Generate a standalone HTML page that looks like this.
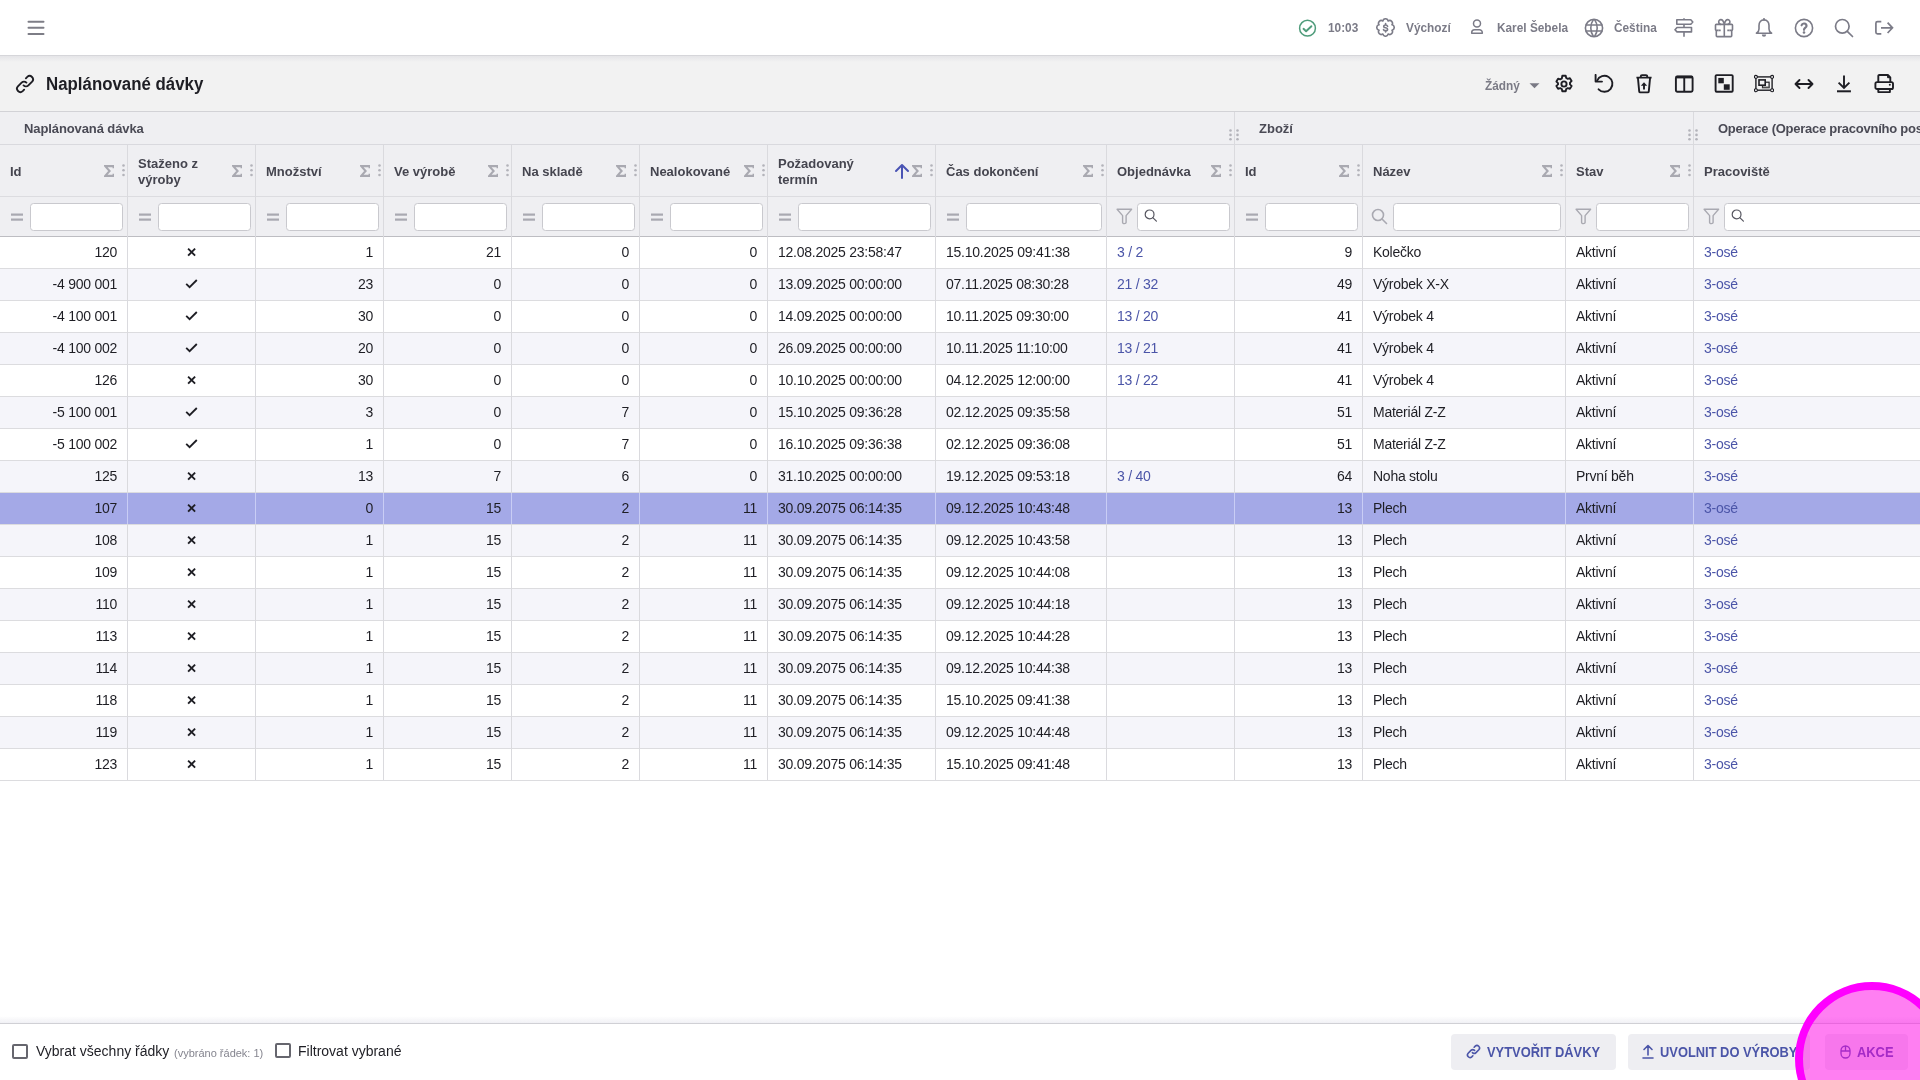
<!DOCTYPE html>
<html><head><meta charset="utf-8"><title>Naplánované dávky</title>
<style>
*{box-sizing:border-box;margin:0;padding:0}
html,body{width:1920px;height:1080px;overflow:hidden;background:#fff;font-family:"Liberation Sans",sans-serif;color:#1e1e24}
.abs{position:absolute}
.topbar{position:absolute;left:0;top:0;width:1920px;height:56px;background:#fff;border-bottom:1px solid #d6d6da}
.shadow{position:absolute;left:0;top:56px;width:1920px;height:6px;background:linear-gradient(#e5e5e8,#f2f2f2)}
.titlebar{position:absolute;left:0;top:56px;width:1920px;height:56px;background:#f2f2f2;border-bottom:1px solid #d2d2d6}
.tb-t{position:absolute;font-size:13px;font-weight:bold;color:#7b7b87;white-space:nowrap;line-height:16px;transform:scaleX(.91);transform-origin:0 0}
.title{position:absolute;left:46px;top:73px;font-size:18px;font-weight:bold;color:#1e1e24;line-height:22px;white-space:nowrap;transform:scaleX(.936);transform-origin:0 0}
.ghead{position:absolute;left:0;top:112px;width:1920px;height:33px;background:#efeff2;border-bottom:1px solid #d9d9de}
.chead{position:absolute;left:0;top:145px;width:1920px;height:52px;background:#efeff2;border-bottom:1px solid #dcdce0}
.frow{position:absolute;left:0;top:197px;width:1920px;height:40px;background:#efeff2;border-bottom:1px solid #bdbdc2}
.gt{position:absolute;font-size:13px;font-weight:bold;color:#4a4a55;line-height:16px;white-space:nowrap}
.ht{position:absolute;font-size:13px;font-weight:bold;color:#45454f;line-height:16px;white-space:nowrap}
.vl{position:absolute;width:1px;background:#dadade}
.inp{position:absolute;top:203px;height:28px;background:#fff;border:1px solid #c9c9ce;border-radius:3.5px}
.row{position:absolute;left:0;width:1920px;height:32px;border-bottom:1px solid #dcdcdf}
.c{position:absolute;font-size:14px;line-height:16px;white-space:nowrap;color:#1e1e24;letter-spacing:-0.25px}
.lnk{color:#4b55a8}
.footer{position:absolute;left:0;top:1023px;width:1920px;height:57px;background:#fff;border-top:1px solid #d0d0d5}
.cb{position:absolute;width:16px;height:15px;border:2px solid #66666e;border-radius:2px;background:#fff}
.ft{position:absolute;font-size:14px;line-height:16px;white-space:nowrap;color:#1e1e24}
.btn{position:absolute;top:1034px;height:36px;background:#eeeef2;border-radius:4px}
.bt{position:absolute;font-size:14px;font-weight:bold;color:#4b55a8;line-height:16px;white-space:nowrap;transform:scaleX(.92);transform-origin:0 0}
</style></head><body><div id="root" style="position:absolute;left:0;top:0;width:1920px;height:1080px;will-change:transform">

<div class="topbar"></div>
<svg class="abs" style="left:27px;top:20px" width="18" height="16" viewBox="0 0 18 16"><path d="M1.5 1.8H16.5M1.5 7.8H16.5M1.5 13.9H16.5" stroke="#7d7d86" stroke-width="2" stroke-linecap="round"/></svg>
<svg class="abs" style="left:1298px;top:19px" width="19" height="19" viewBox="0 0 19 19"><circle cx="9.5" cy="9.2" r="7.9" fill="none" stroke="#4f9c7b" stroke-width="1.5"/><path d="M5.5 9.8l2.6 2.5 5.3-5.1" fill="none" stroke="#4f9c7b" stroke-width="1.9" stroke-linecap="round" stroke-linejoin="round"/></svg>
<div class="tb-t" style="left:1328px;top:20px">10:03</div>
<svg class="abs" style="left:1376px;top:18px" width="19" height="19" viewBox="0 0 19 19"><path d="M12.18 3.03 A2.72 2.72 0 0 1 15.97 6.82 A2.72 2.72 0 0 1 15.97 12.18 A2.72 2.72 0 0 1 12.18 15.97 A2.72 2.72 0 0 1 6.82 15.97 A2.72 2.72 0 0 1 3.03 12.18 A2.72 2.72 0 0 1 3.03 6.82 A2.72 2.72 0 0 1 6.82 3.03 A2.72 2.72 0 0 1 12.18 3.03Z" fill="none" stroke="#7b7b87" stroke-width="1.6" stroke-linejoin="round"/><path d="M11.6 8.2c-.3-.8-1-1.2-2-1.2-1.1 0-1.9.6-1.9 1.4 0 .9.8 1.2 1.9 1.4s2 .6 2 1.5c0 .9-.9 1.5-2 1.5-1 0-1.8-.4-2.1-1.2M9.6 5.6v1.4M9.6 12.6v1.4" fill="none" stroke="#7b7b87" stroke-width="1.6" stroke-linecap="round"/></svg>
<div class="tb-t" style="left:1406px;top:20px">Výchozí</div>
<svg class="abs" style="left:1469px;top:19px" width="16" height="16" viewBox="0 0 16 16"><circle cx="8" cy="4.4" r="3.5" fill="none" stroke="#7b7b87" stroke-width="1.5"/><path d="M2.7 14.2v-.6a2.9 2.9 0 0 1 2.9-2.9h4.8a2.9 2.9 0 0 1 2.9 2.9v.6z" fill="none" stroke="#7b7b87" stroke-width="1.5" stroke-linejoin="round"/></svg>
<div class="tb-t" style="left:1497px;top:20px">Karel Šebela</div>
<svg class="abs" style="left:1584px;top:18px" width="20" height="20" viewBox="0 0 20 20"><circle cx="10" cy="10" r="8.6" fill="none" stroke="#7b7b87" stroke-width="1.6"/><path d="M1.6 7h16.8M1.6 13h16.8" stroke="#7b7b87" stroke-width="1.6"/><path d="M9.5 1.4a15 15 0 0 0 0 17.2M10.5 1.4a15 15 0 0 1 0 17.2" fill="none" stroke="#7b7b87" stroke-width="1.6"/></svg>
<div class="tb-t" style="left:1614px;top:20px">Čeština</div>
<svg class="abs" style="left:1674px;top:18px" width="20" height="20" viewBox="0 0 20 20"><path d="M10 0.3v1.5M10 6.2v3M10 13.9v4.8" stroke="#7b7b87" stroke-width="1.6"/><path d="M2.8 1.8h14l2 2.2-2 2.2h-14z" fill="none" stroke="#7b7b87" stroke-width="1.6" stroke-linejoin="round"/><path d="M17.5 9.5H3l-2 2.2 2 2.2h14.5z" fill="none" stroke="#7b7b87" stroke-width="1.6" stroke-linejoin="round"/></svg>
<svg class="abs" style="left:1714px;top:18px" width="20" height="20" viewBox="0 0 20 20"><path d="M4.5 12.4H2.3a.8.8 0 0 1-.8-.8V7.2a.8.8 0 0 1 .8-.8h15.4a.8.8 0 0 1 .8.8v4.4a.8.8 0 0 1-.8.8h-2.2M2.3 12v5.7a.9.9 0 0 0 .9.9h13.6a.9.9 0 0 0 .9-.9V12M10.3 6.4v12.2" fill="none" stroke="#7b7b87" stroke-width="1.6" stroke-linejoin="round"/><path d="M4.5 12.4h2.2M13.3 12.4h2.2" stroke="#7b7b87" stroke-width="1.6"/><path d="M10.3 6.4C9.6 3.5 8.4 1.6 6.9 1.6a2.2 2.2 0 0 0-2.2 2.2c0 1.3 1 2.6 2.2 2.6M10.3 6.4c.7-2.9 1.9-4.8 3.4-4.8a2.2 2.2 0 0 1 2.2 2.2c0 1.3-1 2.6-2.2 2.6" fill="none" stroke="#7b7b87" stroke-width="1.6"/></svg>
<svg class="abs" style="left:1754px;top:18px" width="20" height="20" viewBox="0 0 20 20"><path d="M10 1.9c-3.2 0-5 2.6-5 5.6v3.4c0 2.2-1.4 3.6-2.6 4.3h15.2c-1.2-.7-2.6-2.1-2.6-4.3V7.5c0-3-1.8-5.6-5-5.6z" fill="none" stroke="#7b7b87" stroke-width="1.6" stroke-linejoin="round"/><path d="M10 0.5v1.4" stroke="#7b7b87" stroke-width="1.6" stroke-linecap="round"/><path d="M7.8 16.6a2.2 2.2 0 0 0 4.4 0z" fill="#7b7b87"/></svg>
<svg class="abs" style="left:1794px;top:18px" width="20" height="20" viewBox="0 0 20 20"><circle cx="10" cy="10" r="8.6" fill="none" stroke="#7b7b87" stroke-width="1.6"/><path d="M7.6 7.3a2.5 2.5 0 0 1 4.9.6c0 1.7-2.5 1.9-2.5 3.9" fill="none" stroke="#7b7b87" stroke-width="2.2" stroke-linecap="round"/><circle cx="10" cy="14.5" r="1.3" fill="#7b7b87"/></svg>
<svg class="abs" style="left:1834px;top:18px" width="20" height="20" viewBox="0 0 20 20"><circle cx="8.3" cy="8.3" r="6.8" fill="none" stroke="#7b7b87" stroke-width="1.7"/><path d="M13.3 13.3l5.2 5.2" stroke="#7b7b87" stroke-width="1.7" stroke-linecap="round"/></svg>
<svg class="abs" style="left:1874px;top:18px" width="20" height="20" viewBox="0 0 20 20"><path d="M7.3 3.6H3.5a1.6 1.6 0 0 0-1.6 1.6v9a1.6 1.6 0 0 0 1.6 1.6h3.8" fill="none" stroke="#7b7b87" stroke-width="1.7"/><path d="M7 9.8h11.4M13.6 4.6l4.9 5.2-4.9 5.2" fill="none" stroke="#7b7b87" stroke-width="1.7" stroke-linejoin="miter"/></svg>
<div class="titlebar"></div>
<div class="shadow"></div>
<svg class="abs" style="left:15px;top:74px" width="20" height="20" viewBox="0 0 20 20"><path d="M8.6 11.4a3.4 3.4 0 0 0 4.8 0l3.7-3.7a3.4 3.4 0 0 0-4.8-4.8l-1.4 1.4" fill="none" stroke="#1e1e24" stroke-width="1.9" stroke-linecap="round"/><path d="M11.4 8.6a3.4 3.4 0 0 0-4.8 0l-3.7 3.7a3.4 3.4 0 0 0 4.8 4.8l1.4-1.4" fill="none" stroke="#1e1e24" stroke-width="1.9" stroke-linecap="round"/></svg>
<div class="title">Naplánované dávky</div>
<div class="tb-t" style="left:1485px;top:78px;color:#7a7a85">Žádný</div>
<svg class="abs" style="left:1529px;top:83px" width="11" height="6" viewBox="0 0 11 6"><path d="M0.5 0.3h10L5.5 5.3z" fill="#7a7a85"/></svg>
<svg class="abs" style="left:1554px;top:74px" width="20" height="20" viewBox="0 0 20 20"><path d="M8.3 1.8h3.4l.5 2.2 1.6.9 2.1-.7 1.7 2.9-1.6 1.5v1.8l1.6 1.5-1.7 2.9-2.1-.7-1.6.9-.5 2.2H8.3l-.5-2.2-1.6-.9-2.1.7-1.7-2.9 1.6-1.5V9.1L2.4 7.6l1.7-2.9 2.1.7 1.6-.9z" stroke="#1e1e24" stroke-width="1.9" fill="none" stroke-linejoin="round"/><circle cx="10" cy="10" r="2.6" stroke="#1e1e24" stroke-width="1.9" fill="none"/></svg>
<svg class="abs" style="left:1594px;top:74px" width="20" height="20" viewBox="0 0 20 20"><path d="M1.6 0.9V7.6H8" stroke="#1e1e24" stroke-width="1.9" fill="none" stroke-linecap="round" stroke-linejoin="round"/><path d="M3.1 6.6A8 8 0 1 1 4.6 15.3" stroke="#1e1e24" stroke-width="1.9" fill="none" stroke-linecap="round"/></svg>
<svg class="abs" style="left:1634px;top:74px" width="20" height="20" viewBox="0 0 20 20"><path d="M2.4 3.6h15.2M3.9 3.6l1.3 13.8a1.1 1.1 0 0 0 1.1 1h7.4a1.1 1.1 0 0 0 1.1-1l1.3-13.8M6.8 3.6V2.3a1.2 1.2 0 0 1 1.2-1.2h4a1.2 1.2 0 0 1 1.2 1.2v1.3" stroke="#1e1e24" stroke-width="1.9" fill="none" stroke-linejoin="round"/><path d="M10 15.5V10.5" stroke="#1e1e24" stroke-width="1.9" fill="none"/><path d="M6.8 11.8L10 8.2l3.2 3.6z" fill="#1e1e24"/></svg>
<svg class="abs" style="left:1674px;top:74px" width="20" height="20" viewBox="0 0 20 20"><rect x="1.9" y="2.5" width="16.7" height="15.2" rx="1.4" stroke="#1e1e24" stroke-width="1.9" fill="none"/><path d="M2.5 3.1h15.5" stroke="#1e1e24" stroke-width="2.6"/><path d="M10.25 2.5v15.2" stroke="#1e1e24" stroke-width="1.9" fill="none"/></svg>
<svg class="abs" style="left:1714px;top:74px" width="20" height="20" viewBox="0 0 20 20"><rect x="1.6" y="1.1" width="17.1" height="16.7" rx="1" stroke="#1e1e24" stroke-width="1.9" fill="none"/><rect x="4.3" y="3.9" width="5.5" height="5.4" fill="#1e1e24"/><rect x="9.8" y="10.3" width="5.9" height="5.5" fill="#1e1e24"/></svg>
<svg class="abs" style="left:1754px;top:74px" width="20" height="20" viewBox="0 0 20 20"><rect x="1.9" y="2.9" width="16.2" height="13.3" stroke="#1e1e24" stroke-width="1.4" fill="none"/><circle cx="1.9" cy="2.9" r="1.5" stroke="#1e1e24" stroke-width="1.1" fill="#f2f2f3"/><circle cx="18.1" cy="2.9" r="1.5" stroke="#1e1e24" stroke-width="1.1" fill="#f2f2f3"/><circle cx="1.9" cy="16.2" r="1.5" stroke="#1e1e24" stroke-width="1.1" fill="#f2f2f3"/><circle cx="18.1" cy="16.2" r="1.5" stroke="#1e1e24" stroke-width="1.1" fill="#f2f2f3"/><rect x="8.5" y="8.2" width="6.6" height="5.5" stroke="#1e1e24" stroke-width="1.2" fill="none"/><rect x="5" y="5.9" width="6.2" height="5.3" stroke="#1e1e24" stroke-width="1.6" fill="#f2f2f3"/><path d="M8.5 13.2h6.6" stroke="#555" stroke-width="1.3"/></svg>
<svg class="abs" style="left:1794px;top:74px" width="20" height="20" viewBox="0 0 20 20"><path d="M1.5 10h17M5.5 6l-4 4 4 4M14.5 6l4 4-4 4" stroke="#1e1e24" stroke-width="1.9" fill="none" stroke-linecap="round" stroke-linejoin="round"/></svg>
<svg class="abs" style="left:1834px;top:74px" width="20" height="20" viewBox="0 0 20 20"><path d="M10 1.4v12.2M4.6 8.6L10 14l5.4-5.4" stroke="#1e1e24" stroke-width="1.9" fill="none" stroke-linejoin="miter"/><path d="M3 17.3h13.9" stroke="#1e1e24" stroke-width="2"/></svg>
<svg class="abs" style="left:1874px;top:74px" width="20" height="20" viewBox="0 0 20 20"><path d="M4.3 8V2a1 1 0 0 1 1-1h8.6l2.4 2.4V8" stroke="#1e1e24" stroke-width="1.9" fill="none" stroke-linejoin="round"/><rect x="1.4" y="8.1" width="17.6" height="6.9" rx="1.6" stroke="#1e1e24" stroke-width="1.9" fill="none"/><path d="M4.3 15v3.1h11.6V15" stroke="#1e1e24" stroke-width="1.9" fill="none" stroke-linejoin="round"/><circle cx="15.8" cy="10.8" r="1" fill="#1e1e24"/><path d="M13.6 1.2v2.5h2.5" fill="#1e1e24" stroke="#1e1e24" stroke-width="1"/></svg>
<div class="ghead"></div><div class="chead"></div><div class="frow"></div>
<div class="gt" style="left:24px;top:121px;letter-spacing:-0.1px">Naplánovaná dávka</div>
<div class="gt" style="left:1259px;top:121px">Zboží</div>
<div class="gt" style="left:1718px;top:121px;letter-spacing:-0.25px">Operace (Operace pracovního postupu)</div>
<div class="vl" style="left:1234px;top:112px;height:33px"></div>
<svg class="abs" style="left:1229px;top:128.5px" width="3" height="13" viewBox="0 0 3 13"><circle cx="1.5" cy="1.5" r="1.3" fill="#b3b3ba"/><circle cx="1.5" cy="5.9" r="1.3" fill="#b3b3ba"/><circle cx="1.5" cy="10.3" r="1.3" fill="#b3b3ba"/></svg>
<svg class="abs" style="left:1236px;top:128.5px" width="3" height="13" viewBox="0 0 3 13"><circle cx="1.5" cy="1.5" r="1.3" fill="#b3b3ba"/><circle cx="1.5" cy="5.9" r="1.3" fill="#b3b3ba"/><circle cx="1.5" cy="10.3" r="1.3" fill="#b3b3ba"/></svg>
<div class="vl" style="left:1693px;top:112px;height:33px"></div>
<svg class="abs" style="left:1688px;top:128.5px" width="3" height="13" viewBox="0 0 3 13"><circle cx="1.5" cy="1.5" r="1.3" fill="#b3b3ba"/><circle cx="1.5" cy="5.9" r="1.3" fill="#b3b3ba"/><circle cx="1.5" cy="10.3" r="1.3" fill="#b3b3ba"/></svg>
<svg class="abs" style="left:1695px;top:128.5px" width="3" height="13" viewBox="0 0 3 13"><circle cx="1.5" cy="1.5" r="1.3" fill="#b3b3ba"/><circle cx="1.5" cy="5.9" r="1.3" fill="#b3b3ba"/><circle cx="1.5" cy="10.3" r="1.3" fill="#b3b3ba"/></svg>
<div class="vl" style="left:127px;top:145px;height:635px"></div>
<div class="ht" style="left:10px;top:164px">Id</div>
<div class="abs" style="left:104px;top:165px;line-height:0"><svg width="10" height="12" viewBox="0 0 10 12"><path d="M9.6 3.2V1.1H1.2L5.6 6 1.2 10.9H9.6V8.8" fill="none" stroke="#a9a9b1" stroke-width="2.1" stroke-linejoin="miter" stroke-miterlimit="3"/></svg></div>
<div class="abs" style="left:122px;top:164px;line-height:0"><svg width="3" height="13" viewBox="0 0 3 13"><circle cx="1.5" cy="1.5" r="1.3" fill="#b3b3ba"/><circle cx="1.5" cy="6.3" r="1.3" fill="#b3b3ba"/><circle cx="1.5" cy="11" r="1.3" fill="#b3b3ba"/></svg></div>
<div class="abs" style="left:11px;top:213px;line-height:0"><svg width="12" height="8" viewBox="0 0 12 8"><rect x="0" y="0.5" width="12" height="2.2" fill="#a9a9b1"/><rect x="0" y="5.5" width="12" height="2.2" fill="#a9a9b1"/></svg></div>
<div class="inp" style="left:30px;width:93px"></div>
<div class="vl" style="left:255px;top:145px;height:635px"></div>
<div class="ht" style="left:138px;top:156px">Staženo z<br>výroby</div>
<div class="abs" style="left:232px;top:165px;line-height:0"><svg width="10" height="12" viewBox="0 0 10 12"><path d="M9.6 3.2V1.1H1.2L5.6 6 1.2 10.9H9.6V8.8" fill="none" stroke="#a9a9b1" stroke-width="2.1" stroke-linejoin="miter" stroke-miterlimit="3"/></svg></div>
<div class="abs" style="left:250px;top:164px;line-height:0"><svg width="3" height="13" viewBox="0 0 3 13"><circle cx="1.5" cy="1.5" r="1.3" fill="#b3b3ba"/><circle cx="1.5" cy="6.3" r="1.3" fill="#b3b3ba"/><circle cx="1.5" cy="11" r="1.3" fill="#b3b3ba"/></svg></div>
<div class="abs" style="left:139px;top:213px;line-height:0"><svg width="12" height="8" viewBox="0 0 12 8"><rect x="0" y="0.5" width="12" height="2.2" fill="#a9a9b1"/><rect x="0" y="5.5" width="12" height="2.2" fill="#a9a9b1"/></svg></div>
<div class="inp" style="left:158px;width:93px"></div>
<div class="vl" style="left:383px;top:145px;height:635px"></div>
<div class="ht" style="left:266px;top:164px">Množství</div>
<div class="abs" style="left:360px;top:165px;line-height:0"><svg width="10" height="12" viewBox="0 0 10 12"><path d="M9.6 3.2V1.1H1.2L5.6 6 1.2 10.9H9.6V8.8" fill="none" stroke="#a9a9b1" stroke-width="2.1" stroke-linejoin="miter" stroke-miterlimit="3"/></svg></div>
<div class="abs" style="left:378px;top:164px;line-height:0"><svg width="3" height="13" viewBox="0 0 3 13"><circle cx="1.5" cy="1.5" r="1.3" fill="#b3b3ba"/><circle cx="1.5" cy="6.3" r="1.3" fill="#b3b3ba"/><circle cx="1.5" cy="11" r="1.3" fill="#b3b3ba"/></svg></div>
<div class="abs" style="left:267px;top:213px;line-height:0"><svg width="12" height="8" viewBox="0 0 12 8"><rect x="0" y="0.5" width="12" height="2.2" fill="#a9a9b1"/><rect x="0" y="5.5" width="12" height="2.2" fill="#a9a9b1"/></svg></div>
<div class="inp" style="left:286px;width:93px"></div>
<div class="vl" style="left:511px;top:145px;height:635px"></div>
<div class="ht" style="left:394px;top:164px">Ve výrobě</div>
<div class="abs" style="left:488px;top:165px;line-height:0"><svg width="10" height="12" viewBox="0 0 10 12"><path d="M9.6 3.2V1.1H1.2L5.6 6 1.2 10.9H9.6V8.8" fill="none" stroke="#a9a9b1" stroke-width="2.1" stroke-linejoin="miter" stroke-miterlimit="3"/></svg></div>
<div class="abs" style="left:506px;top:164px;line-height:0"><svg width="3" height="13" viewBox="0 0 3 13"><circle cx="1.5" cy="1.5" r="1.3" fill="#b3b3ba"/><circle cx="1.5" cy="6.3" r="1.3" fill="#b3b3ba"/><circle cx="1.5" cy="11" r="1.3" fill="#b3b3ba"/></svg></div>
<div class="abs" style="left:395px;top:213px;line-height:0"><svg width="12" height="8" viewBox="0 0 12 8"><rect x="0" y="0.5" width="12" height="2.2" fill="#a9a9b1"/><rect x="0" y="5.5" width="12" height="2.2" fill="#a9a9b1"/></svg></div>
<div class="inp" style="left:414px;width:93px"></div>
<div class="vl" style="left:639px;top:145px;height:635px"></div>
<div class="ht" style="left:522px;top:164px">Na skladě</div>
<div class="abs" style="left:616px;top:165px;line-height:0"><svg width="10" height="12" viewBox="0 0 10 12"><path d="M9.6 3.2V1.1H1.2L5.6 6 1.2 10.9H9.6V8.8" fill="none" stroke="#a9a9b1" stroke-width="2.1" stroke-linejoin="miter" stroke-miterlimit="3"/></svg></div>
<div class="abs" style="left:634px;top:164px;line-height:0"><svg width="3" height="13" viewBox="0 0 3 13"><circle cx="1.5" cy="1.5" r="1.3" fill="#b3b3ba"/><circle cx="1.5" cy="6.3" r="1.3" fill="#b3b3ba"/><circle cx="1.5" cy="11" r="1.3" fill="#b3b3ba"/></svg></div>
<div class="abs" style="left:523px;top:213px;line-height:0"><svg width="12" height="8" viewBox="0 0 12 8"><rect x="0" y="0.5" width="12" height="2.2" fill="#a9a9b1"/><rect x="0" y="5.5" width="12" height="2.2" fill="#a9a9b1"/></svg></div>
<div class="inp" style="left:542px;width:93px"></div>
<div class="vl" style="left:767px;top:145px;height:635px"></div>
<div class="ht" style="left:650px;top:164px">Nealokované</div>
<div class="abs" style="left:744px;top:165px;line-height:0"><svg width="10" height="12" viewBox="0 0 10 12"><path d="M9.6 3.2V1.1H1.2L5.6 6 1.2 10.9H9.6V8.8" fill="none" stroke="#a9a9b1" stroke-width="2.1" stroke-linejoin="miter" stroke-miterlimit="3"/></svg></div>
<div class="abs" style="left:762px;top:164px;line-height:0"><svg width="3" height="13" viewBox="0 0 3 13"><circle cx="1.5" cy="1.5" r="1.3" fill="#b3b3ba"/><circle cx="1.5" cy="6.3" r="1.3" fill="#b3b3ba"/><circle cx="1.5" cy="11" r="1.3" fill="#b3b3ba"/></svg></div>
<div class="abs" style="left:651px;top:213px;line-height:0"><svg width="12" height="8" viewBox="0 0 12 8"><rect x="0" y="0.5" width="12" height="2.2" fill="#a9a9b1"/><rect x="0" y="5.5" width="12" height="2.2" fill="#a9a9b1"/></svg></div>
<div class="inp" style="left:670px;width:93px"></div>
<div class="vl" style="left:935px;top:145px;height:635px"></div>
<div class="ht" style="left:778px;top:156px">Požadovaný<br>termín</div>
<div class="abs" style="left:912px;top:165px;line-height:0"><svg width="10" height="12" viewBox="0 0 10 12"><path d="M9.6 3.2V1.1H1.2L5.6 6 1.2 10.9H9.6V8.8" fill="none" stroke="#a9a9b1" stroke-width="2.1" stroke-linejoin="miter" stroke-miterlimit="3"/></svg></div>
<div class="abs" style="left:930px;top:164px;line-height:0"><svg width="3" height="13" viewBox="0 0 3 13"><circle cx="1.5" cy="1.5" r="1.3" fill="#b3b3ba"/><circle cx="1.5" cy="6.3" r="1.3" fill="#b3b3ba"/><circle cx="1.5" cy="11" r="1.3" fill="#b3b3ba"/></svg></div>
<svg class="abs" style="left:894px;top:163px" width="16" height="16" viewBox="0 0 16 16"><path d="M8 15V2M2 8l6-6 6 6" fill="none" stroke="#4a54b4" stroke-width="2" stroke-linecap="round" stroke-linejoin="round"/></svg>
<div class="abs" style="left:779px;top:213px;line-height:0"><svg width="12" height="8" viewBox="0 0 12 8"><rect x="0" y="0.5" width="12" height="2.2" fill="#a9a9b1"/><rect x="0" y="5.5" width="12" height="2.2" fill="#a9a9b1"/></svg></div>
<div class="inp" style="left:798px;width:133px"></div>
<div class="vl" style="left:1106px;top:145px;height:635px"></div>
<div class="ht" style="left:946px;top:164px">Čas dokončení</div>
<div class="abs" style="left:1083px;top:165px;line-height:0"><svg width="10" height="12" viewBox="0 0 10 12"><path d="M9.6 3.2V1.1H1.2L5.6 6 1.2 10.9H9.6V8.8" fill="none" stroke="#a9a9b1" stroke-width="2.1" stroke-linejoin="miter" stroke-miterlimit="3"/></svg></div>
<div class="abs" style="left:1101px;top:164px;line-height:0"><svg width="3" height="13" viewBox="0 0 3 13"><circle cx="1.5" cy="1.5" r="1.3" fill="#b3b3ba"/><circle cx="1.5" cy="6.3" r="1.3" fill="#b3b3ba"/><circle cx="1.5" cy="11" r="1.3" fill="#b3b3ba"/></svg></div>
<div class="abs" style="left:947px;top:213px;line-height:0"><svg width="12" height="8" viewBox="0 0 12 8"><rect x="0" y="0.5" width="12" height="2.2" fill="#a9a9b1"/><rect x="0" y="5.5" width="12" height="2.2" fill="#a9a9b1"/></svg></div>
<div class="inp" style="left:966px;width:136px"></div>
<div class="vl" style="left:1234px;top:145px;height:635px"></div>
<div class="ht" style="left:1117px;top:164px">Objednávka</div>
<div class="abs" style="left:1211px;top:165px;line-height:0"><svg width="10" height="12" viewBox="0 0 10 12"><path d="M9.6 3.2V1.1H1.2L5.6 6 1.2 10.9H9.6V8.8" fill="none" stroke="#a9a9b1" stroke-width="2.1" stroke-linejoin="miter" stroke-miterlimit="3"/></svg></div>
<div class="abs" style="left:1229px;top:164px;line-height:0"><svg width="3" height="13" viewBox="0 0 3 13"><circle cx="1.5" cy="1.5" r="1.3" fill="#b3b3ba"/><circle cx="1.5" cy="6.3" r="1.3" fill="#b3b3ba"/><circle cx="1.5" cy="11" r="1.3" fill="#b3b3ba"/></svg></div>
<div class="abs" style="left:1116px;top:208px;line-height:0"><svg width="17" height="17" viewBox="0 0 17 17"><path d="M1.1 1.3H15.6L10.1 7.6V14.6C10.1 16 6.6 16 6.6 14.6V7.6Z" fill="none" stroke="#a9a9b1" stroke-width="1.4" stroke-linejoin="round"/></svg></div>
<div class="inp" style="left:1137px;width:93px"></div>
<div class="abs" style="left:1144px;top:209px;line-height:0"><svg width="14" height="14" viewBox="0 0 14 14"><circle cx="5.6" cy="5.4" r="4.4" fill="none" stroke="#55555f" stroke-width="1.2"/><path d="M8.8 8.6l3.6 3.6" stroke="#55555f" stroke-width="1.2" stroke-linecap="round"/></svg></div>
<div class="vl" style="left:1362px;top:145px;height:635px"></div>
<div class="ht" style="left:1245px;top:164px">Id</div>
<div class="abs" style="left:1339px;top:165px;line-height:0"><svg width="10" height="12" viewBox="0 0 10 12"><path d="M9.6 3.2V1.1H1.2L5.6 6 1.2 10.9H9.6V8.8" fill="none" stroke="#a9a9b1" stroke-width="2.1" stroke-linejoin="miter" stroke-miterlimit="3"/></svg></div>
<div class="abs" style="left:1357px;top:164px;line-height:0"><svg width="3" height="13" viewBox="0 0 3 13"><circle cx="1.5" cy="1.5" r="1.3" fill="#b3b3ba"/><circle cx="1.5" cy="6.3" r="1.3" fill="#b3b3ba"/><circle cx="1.5" cy="11" r="1.3" fill="#b3b3ba"/></svg></div>
<div class="abs" style="left:1246px;top:213px;line-height:0"><svg width="12" height="8" viewBox="0 0 12 8"><rect x="0" y="0.5" width="12" height="2.2" fill="#a9a9b1"/><rect x="0" y="5.5" width="12" height="2.2" fill="#a9a9b1"/></svg></div>
<div class="inp" style="left:1265px;width:93px"></div>
<div class="vl" style="left:1565px;top:145px;height:635px"></div>
<div class="ht" style="left:1373px;top:164px">Název</div>
<div class="abs" style="left:1542px;top:165px;line-height:0"><svg width="10" height="12" viewBox="0 0 10 12"><path d="M9.6 3.2V1.1H1.2L5.6 6 1.2 10.9H9.6V8.8" fill="none" stroke="#a9a9b1" stroke-width="2.1" stroke-linejoin="miter" stroke-miterlimit="3"/></svg></div>
<div class="abs" style="left:1560px;top:164px;line-height:0"><svg width="3" height="13" viewBox="0 0 3 13"><circle cx="1.5" cy="1.5" r="1.3" fill="#b3b3ba"/><circle cx="1.5" cy="6.3" r="1.3" fill="#b3b3ba"/><circle cx="1.5" cy="11" r="1.3" fill="#b3b3ba"/></svg></div>
<div class="abs" style="left:1371px;top:208px;line-height:0"><svg width="17" height="17" viewBox="0 0 17 17"><circle cx="7" cy="7" r="5.5" fill="none" stroke="#a9a9b1" stroke-width="1.6"/><path d="M11 11l4.5 4.5" stroke="#a9a9b1" stroke-width="1.6" stroke-linecap="round"/></svg></div>
<div class="inp" style="left:1393px;width:168px"></div>
<div class="vl" style="left:1693px;top:145px;height:635px"></div>
<div class="ht" style="left:1576px;top:164px">Stav</div>
<div class="abs" style="left:1670px;top:165px;line-height:0"><svg width="10" height="12" viewBox="0 0 10 12"><path d="M9.6 3.2V1.1H1.2L5.6 6 1.2 10.9H9.6V8.8" fill="none" stroke="#a9a9b1" stroke-width="2.1" stroke-linejoin="miter" stroke-miterlimit="3"/></svg></div>
<div class="abs" style="left:1688px;top:164px;line-height:0"><svg width="3" height="13" viewBox="0 0 3 13"><circle cx="1.5" cy="1.5" r="1.3" fill="#b3b3ba"/><circle cx="1.5" cy="6.3" r="1.3" fill="#b3b3ba"/><circle cx="1.5" cy="11" r="1.3" fill="#b3b3ba"/></svg></div>
<div class="abs" style="left:1575px;top:208px;line-height:0"><svg width="17" height="17" viewBox="0 0 17 17"><path d="M1.1 1.3H15.6L10.1 7.6V14.6C10.1 16 6.6 16 6.6 14.6V7.6Z" fill="none" stroke="#a9a9b1" stroke-width="1.4" stroke-linejoin="round"/></svg></div>
<div class="inp" style="left:1596px;width:93px"></div>
<div class="ht" style="left:1704px;top:164px">Pracoviště</div>
<div class="abs" style="left:1703px;top:208px;line-height:0"><svg width="17" height="17" viewBox="0 0 17 17"><path d="M1.1 1.3H15.6L10.1 7.6V14.6C10.1 16 6.6 16 6.6 14.6V7.6Z" fill="none" stroke="#a9a9b1" stroke-width="1.4" stroke-linejoin="round"/></svg></div>
<div class="inp" style="left:1724px;width:401px"></div>
<div class="abs" style="left:1731px;top:209px;line-height:0"><svg width="14" height="14" viewBox="0 0 14 14"><circle cx="5.6" cy="5.4" r="4.4" fill="none" stroke="#55555f" stroke-width="1.2"/><path d="M8.8 8.6l3.6 3.6" stroke="#55555f" stroke-width="1.2" stroke-linecap="round"/></svg></div>
<div class="row" style="top:237px;height:32px;background:#ffffff"></div>
<div class="c" style="right:1803px;top:244px">120</div>
<div class="abs" style="left:186px;top:247px;line-height:0"><svg width="10" height="10" viewBox="0 0 10 10"><path d="M2.1 1.6L9.1 8.6M9.1 1.6L2.1 8.6" stroke="#1e1e24" stroke-width="1.9"/></svg></div>
<div class="c" style="right:1547px;top:244px">1</div>
<div class="c" style="right:1419px;top:244px">21</div>
<div class="c" style="right:1291px;top:244px">0</div>
<div class="c" style="right:1163px;top:244px">0</div>
<div class="c" style="left:778px;top:244px">12.08.2025 23:58:47</div>
<div class="c" style="left:946px;top:244px">15.10.2025 09:41:38</div>
<div class="c lnk" style="left:1117px;top:244px">3 / 2</div>
<div class="c" style="right:568px;top:244px">9</div>
<div class="c" style="left:1373px;top:244px">Kolečko</div>
<div class="c" style="left:1576px;top:244px">Aktivní</div>
<div class="c lnk" style="left:1704px;top:244px">3-osé</div>
<div class="row" style="top:269px;height:32px;background:#f5f5fa"></div>
<div class="c" style="right:1803px;top:276px">-4 900 001</div>
<div class="abs" style="left:185px;top:279px;line-height:0"><svg width="13" height="10" viewBox="0 0 13 10"><path d="M1.2 4.8l3.4 3.4L11.8 1" fill="none" stroke="#1e1e24" stroke-width="1.8"/></svg></div>
<div class="c" style="right:1547px;top:276px">23</div>
<div class="c" style="right:1419px;top:276px">0</div>
<div class="c" style="right:1291px;top:276px">0</div>
<div class="c" style="right:1163px;top:276px">0</div>
<div class="c" style="left:778px;top:276px">13.09.2025 00:00:00</div>
<div class="c" style="left:946px;top:276px">07.11.2025 08:30:28</div>
<div class="c lnk" style="left:1117px;top:276px">21 / 32</div>
<div class="c" style="right:568px;top:276px">49</div>
<div class="c" style="left:1373px;top:276px">Výrobek X-X</div>
<div class="c" style="left:1576px;top:276px">Aktivní</div>
<div class="c lnk" style="left:1704px;top:276px">3-osé</div>
<div class="row" style="top:301px;height:32px;background:#ffffff"></div>
<div class="c" style="right:1803px;top:308px">-4 100 001</div>
<div class="abs" style="left:185px;top:311px;line-height:0"><svg width="13" height="10" viewBox="0 0 13 10"><path d="M1.2 4.8l3.4 3.4L11.8 1" fill="none" stroke="#1e1e24" stroke-width="1.8"/></svg></div>
<div class="c" style="right:1547px;top:308px">30</div>
<div class="c" style="right:1419px;top:308px">0</div>
<div class="c" style="right:1291px;top:308px">0</div>
<div class="c" style="right:1163px;top:308px">0</div>
<div class="c" style="left:778px;top:308px">14.09.2025 00:00:00</div>
<div class="c" style="left:946px;top:308px">10.11.2025 09:30:00</div>
<div class="c lnk" style="left:1117px;top:308px">13 / 20</div>
<div class="c" style="right:568px;top:308px">41</div>
<div class="c" style="left:1373px;top:308px">Výrobek 4</div>
<div class="c" style="left:1576px;top:308px">Aktivní</div>
<div class="c lnk" style="left:1704px;top:308px">3-osé</div>
<div class="row" style="top:333px;height:32px;background:#f5f5fa"></div>
<div class="c" style="right:1803px;top:340px">-4 100 002</div>
<div class="abs" style="left:185px;top:343px;line-height:0"><svg width="13" height="10" viewBox="0 0 13 10"><path d="M1.2 4.8l3.4 3.4L11.8 1" fill="none" stroke="#1e1e24" stroke-width="1.8"/></svg></div>
<div class="c" style="right:1547px;top:340px">20</div>
<div class="c" style="right:1419px;top:340px">0</div>
<div class="c" style="right:1291px;top:340px">0</div>
<div class="c" style="right:1163px;top:340px">0</div>
<div class="c" style="left:778px;top:340px">26.09.2025 00:00:00</div>
<div class="c" style="left:946px;top:340px">10.11.2025 11:10:00</div>
<div class="c lnk" style="left:1117px;top:340px">13 / 21</div>
<div class="c" style="right:568px;top:340px">41</div>
<div class="c" style="left:1373px;top:340px">Výrobek 4</div>
<div class="c" style="left:1576px;top:340px">Aktivní</div>
<div class="c lnk" style="left:1704px;top:340px">3-osé</div>
<div class="row" style="top:365px;height:32px;background:#ffffff"></div>
<div class="c" style="right:1803px;top:372px">126</div>
<div class="abs" style="left:186px;top:375px;line-height:0"><svg width="10" height="10" viewBox="0 0 10 10"><path d="M2.1 1.6L9.1 8.6M9.1 1.6L2.1 8.6" stroke="#1e1e24" stroke-width="1.9"/></svg></div>
<div class="c" style="right:1547px;top:372px">30</div>
<div class="c" style="right:1419px;top:372px">0</div>
<div class="c" style="right:1291px;top:372px">0</div>
<div class="c" style="right:1163px;top:372px">0</div>
<div class="c" style="left:778px;top:372px">10.10.2025 00:00:00</div>
<div class="c" style="left:946px;top:372px">04.12.2025 12:00:00</div>
<div class="c lnk" style="left:1117px;top:372px">13 / 22</div>
<div class="c" style="right:568px;top:372px">41</div>
<div class="c" style="left:1373px;top:372px">Výrobek 4</div>
<div class="c" style="left:1576px;top:372px">Aktivní</div>
<div class="c lnk" style="left:1704px;top:372px">3-osé</div>
<div class="row" style="top:397px;height:32px;background:#f5f5fa"></div>
<div class="c" style="right:1803px;top:404px">-5 100 001</div>
<div class="abs" style="left:185px;top:407px;line-height:0"><svg width="13" height="10" viewBox="0 0 13 10"><path d="M1.2 4.8l3.4 3.4L11.8 1" fill="none" stroke="#1e1e24" stroke-width="1.8"/></svg></div>
<div class="c" style="right:1547px;top:404px">3</div>
<div class="c" style="right:1419px;top:404px">0</div>
<div class="c" style="right:1291px;top:404px">7</div>
<div class="c" style="right:1163px;top:404px">0</div>
<div class="c" style="left:778px;top:404px">15.10.2025 09:36:28</div>
<div class="c" style="left:946px;top:404px">02.12.2025 09:35:58</div>
<div class="c" style="right:568px;top:404px">51</div>
<div class="c" style="left:1373px;top:404px">Materiál Z-Z</div>
<div class="c" style="left:1576px;top:404px">Aktivní</div>
<div class="c lnk" style="left:1704px;top:404px">3-osé</div>
<div class="row" style="top:429px;height:32px;background:#ffffff"></div>
<div class="c" style="right:1803px;top:436px">-5 100 002</div>
<div class="abs" style="left:185px;top:439px;line-height:0"><svg width="13" height="10" viewBox="0 0 13 10"><path d="M1.2 4.8l3.4 3.4L11.8 1" fill="none" stroke="#1e1e24" stroke-width="1.8"/></svg></div>
<div class="c" style="right:1547px;top:436px">1</div>
<div class="c" style="right:1419px;top:436px">0</div>
<div class="c" style="right:1291px;top:436px">7</div>
<div class="c" style="right:1163px;top:436px">0</div>
<div class="c" style="left:778px;top:436px">16.10.2025 09:36:38</div>
<div class="c" style="left:946px;top:436px">02.12.2025 09:36:08</div>
<div class="c" style="right:568px;top:436px">51</div>
<div class="c" style="left:1373px;top:436px">Materiál Z-Z</div>
<div class="c" style="left:1576px;top:436px">Aktivní</div>
<div class="c lnk" style="left:1704px;top:436px">3-osé</div>
<div class="row" style="top:461px;height:32px;background:#f5f5fa"></div>
<div class="c" style="right:1803px;top:468px">125</div>
<div class="abs" style="left:186px;top:471px;line-height:0"><svg width="10" height="10" viewBox="0 0 10 10"><path d="M2.1 1.6L9.1 8.6M9.1 1.6L2.1 8.6" stroke="#1e1e24" stroke-width="1.9"/></svg></div>
<div class="c" style="right:1547px;top:468px">13</div>
<div class="c" style="right:1419px;top:468px">7</div>
<div class="c" style="right:1291px;top:468px">6</div>
<div class="c" style="right:1163px;top:468px">0</div>
<div class="c" style="left:778px;top:468px">31.10.2025 00:00:00</div>
<div class="c" style="left:946px;top:468px">19.12.2025 09:53:18</div>
<div class="c lnk" style="left:1117px;top:468px">3 / 40</div>
<div class="c" style="right:568px;top:468px">64</div>
<div class="c" style="left:1373px;top:468px">Noha stolu</div>
<div class="c" style="left:1576px;top:468px">První běh</div>
<div class="c lnk" style="left:1704px;top:468px">3-osé</div>
<div class="row" style="top:493px;height:32px;background:#a4a9e7"></div>
<div class="c" style="right:1803px;top:500px">107</div>
<div class="abs" style="left:186px;top:503px;line-height:0"><svg width="10" height="10" viewBox="0 0 10 10"><path d="M2.1 1.6L9.1 8.6M9.1 1.6L2.1 8.6" stroke="#1e1e24" stroke-width="1.9"/></svg></div>
<div class="c" style="right:1547px;top:500px">0</div>
<div class="c" style="right:1419px;top:500px">15</div>
<div class="c" style="right:1291px;top:500px">2</div>
<div class="c" style="right:1163px;top:500px">11</div>
<div class="c" style="left:778px;top:500px">30.09.2075 06:14:35</div>
<div class="c" style="left:946px;top:500px">09.12.2025 10:43:48</div>
<div class="c" style="right:568px;top:500px">13</div>
<div class="c" style="left:1373px;top:500px">Plech</div>
<div class="c" style="left:1576px;top:500px">Aktivní</div>
<div class="c lnk" style="left:1704px;top:500px">3-osé</div>
<div class="row" style="top:525px;height:32px;background:#f5f5fa"></div>
<div class="c" style="right:1803px;top:532px">108</div>
<div class="abs" style="left:186px;top:535px;line-height:0"><svg width="10" height="10" viewBox="0 0 10 10"><path d="M2.1 1.6L9.1 8.6M9.1 1.6L2.1 8.6" stroke="#1e1e24" stroke-width="1.9"/></svg></div>
<div class="c" style="right:1547px;top:532px">1</div>
<div class="c" style="right:1419px;top:532px">15</div>
<div class="c" style="right:1291px;top:532px">2</div>
<div class="c" style="right:1163px;top:532px">11</div>
<div class="c" style="left:778px;top:532px">30.09.2075 06:14:35</div>
<div class="c" style="left:946px;top:532px">09.12.2025 10:43:58</div>
<div class="c" style="right:568px;top:532px">13</div>
<div class="c" style="left:1373px;top:532px">Plech</div>
<div class="c" style="left:1576px;top:532px">Aktivní</div>
<div class="c lnk" style="left:1704px;top:532px">3-osé</div>
<div class="row" style="top:557px;height:32px;background:#ffffff"></div>
<div class="c" style="right:1803px;top:564px">109</div>
<div class="abs" style="left:186px;top:567px;line-height:0"><svg width="10" height="10" viewBox="0 0 10 10"><path d="M2.1 1.6L9.1 8.6M9.1 1.6L2.1 8.6" stroke="#1e1e24" stroke-width="1.9"/></svg></div>
<div class="c" style="right:1547px;top:564px">1</div>
<div class="c" style="right:1419px;top:564px">15</div>
<div class="c" style="right:1291px;top:564px">2</div>
<div class="c" style="right:1163px;top:564px">11</div>
<div class="c" style="left:778px;top:564px">30.09.2075 06:14:35</div>
<div class="c" style="left:946px;top:564px">09.12.2025 10:44:08</div>
<div class="c" style="right:568px;top:564px">13</div>
<div class="c" style="left:1373px;top:564px">Plech</div>
<div class="c" style="left:1576px;top:564px">Aktivní</div>
<div class="c lnk" style="left:1704px;top:564px">3-osé</div>
<div class="row" style="top:589px;height:32px;background:#f5f5fa"></div>
<div class="c" style="right:1803px;top:596px">110</div>
<div class="abs" style="left:186px;top:599px;line-height:0"><svg width="10" height="10" viewBox="0 0 10 10"><path d="M2.1 1.6L9.1 8.6M9.1 1.6L2.1 8.6" stroke="#1e1e24" stroke-width="1.9"/></svg></div>
<div class="c" style="right:1547px;top:596px">1</div>
<div class="c" style="right:1419px;top:596px">15</div>
<div class="c" style="right:1291px;top:596px">2</div>
<div class="c" style="right:1163px;top:596px">11</div>
<div class="c" style="left:778px;top:596px">30.09.2075 06:14:35</div>
<div class="c" style="left:946px;top:596px">09.12.2025 10:44:18</div>
<div class="c" style="right:568px;top:596px">13</div>
<div class="c" style="left:1373px;top:596px">Plech</div>
<div class="c" style="left:1576px;top:596px">Aktivní</div>
<div class="c lnk" style="left:1704px;top:596px">3-osé</div>
<div class="row" style="top:621px;height:32px;background:#ffffff"></div>
<div class="c" style="right:1803px;top:628px">113</div>
<div class="abs" style="left:186px;top:631px;line-height:0"><svg width="10" height="10" viewBox="0 0 10 10"><path d="M2.1 1.6L9.1 8.6M9.1 1.6L2.1 8.6" stroke="#1e1e24" stroke-width="1.9"/></svg></div>
<div class="c" style="right:1547px;top:628px">1</div>
<div class="c" style="right:1419px;top:628px">15</div>
<div class="c" style="right:1291px;top:628px">2</div>
<div class="c" style="right:1163px;top:628px">11</div>
<div class="c" style="left:778px;top:628px">30.09.2075 06:14:35</div>
<div class="c" style="left:946px;top:628px">09.12.2025 10:44:28</div>
<div class="c" style="right:568px;top:628px">13</div>
<div class="c" style="left:1373px;top:628px">Plech</div>
<div class="c" style="left:1576px;top:628px">Aktivní</div>
<div class="c lnk" style="left:1704px;top:628px">3-osé</div>
<div class="row" style="top:653px;height:32px;background:#f5f5fa"></div>
<div class="c" style="right:1803px;top:660px">114</div>
<div class="abs" style="left:186px;top:663px;line-height:0"><svg width="10" height="10" viewBox="0 0 10 10"><path d="M2.1 1.6L9.1 8.6M9.1 1.6L2.1 8.6" stroke="#1e1e24" stroke-width="1.9"/></svg></div>
<div class="c" style="right:1547px;top:660px">1</div>
<div class="c" style="right:1419px;top:660px">15</div>
<div class="c" style="right:1291px;top:660px">2</div>
<div class="c" style="right:1163px;top:660px">11</div>
<div class="c" style="left:778px;top:660px">30.09.2075 06:14:35</div>
<div class="c" style="left:946px;top:660px">09.12.2025 10:44:38</div>
<div class="c" style="right:568px;top:660px">13</div>
<div class="c" style="left:1373px;top:660px">Plech</div>
<div class="c" style="left:1576px;top:660px">Aktivní</div>
<div class="c lnk" style="left:1704px;top:660px">3-osé</div>
<div class="row" style="top:685px;height:32px;background:#ffffff"></div>
<div class="c" style="right:1803px;top:692px">118</div>
<div class="abs" style="left:186px;top:695px;line-height:0"><svg width="10" height="10" viewBox="0 0 10 10"><path d="M2.1 1.6L9.1 8.6M9.1 1.6L2.1 8.6" stroke="#1e1e24" stroke-width="1.9"/></svg></div>
<div class="c" style="right:1547px;top:692px">1</div>
<div class="c" style="right:1419px;top:692px">15</div>
<div class="c" style="right:1291px;top:692px">2</div>
<div class="c" style="right:1163px;top:692px">11</div>
<div class="c" style="left:778px;top:692px">30.09.2075 06:14:35</div>
<div class="c" style="left:946px;top:692px">15.10.2025 09:41:38</div>
<div class="c" style="right:568px;top:692px">13</div>
<div class="c" style="left:1373px;top:692px">Plech</div>
<div class="c" style="left:1576px;top:692px">Aktivní</div>
<div class="c lnk" style="left:1704px;top:692px">3-osé</div>
<div class="row" style="top:717px;height:32px;background:#f5f5fa"></div>
<div class="c" style="right:1803px;top:724px">119</div>
<div class="abs" style="left:186px;top:727px;line-height:0"><svg width="10" height="10" viewBox="0 0 10 10"><path d="M2.1 1.6L9.1 8.6M9.1 1.6L2.1 8.6" stroke="#1e1e24" stroke-width="1.9"/></svg></div>
<div class="c" style="right:1547px;top:724px">1</div>
<div class="c" style="right:1419px;top:724px">15</div>
<div class="c" style="right:1291px;top:724px">2</div>
<div class="c" style="right:1163px;top:724px">11</div>
<div class="c" style="left:778px;top:724px">30.09.2075 06:14:35</div>
<div class="c" style="left:946px;top:724px">09.12.2025 10:44:48</div>
<div class="c" style="right:568px;top:724px">13</div>
<div class="c" style="left:1373px;top:724px">Plech</div>
<div class="c" style="left:1576px;top:724px">Aktivní</div>
<div class="c lnk" style="left:1704px;top:724px">3-osé</div>
<div class="row" style="top:749px;height:32px;background:#ffffff"></div>
<div class="c" style="right:1803px;top:756px">123</div>
<div class="abs" style="left:186px;top:759px;line-height:0"><svg width="10" height="10" viewBox="0 0 10 10"><path d="M2.1 1.6L9.1 8.6M9.1 1.6L2.1 8.6" stroke="#1e1e24" stroke-width="1.9"/></svg></div>
<div class="c" style="right:1547px;top:756px">1</div>
<div class="c" style="right:1419px;top:756px">15</div>
<div class="c" style="right:1291px;top:756px">2</div>
<div class="c" style="right:1163px;top:756px">11</div>
<div class="c" style="left:778px;top:756px">30.09.2075 06:14:35</div>
<div class="c" style="left:946px;top:756px">15.10.2025 09:41:48</div>
<div class="c" style="right:568px;top:756px">13</div>
<div class="c" style="left:1373px;top:756px">Plech</div>
<div class="c" style="left:1576px;top:756px">Aktivní</div>
<div class="c lnk" style="left:1704px;top:756px">3-osé</div>
<div class="vl" style="left:127px;top:237px;height:543px;background:#dadade"></div>
<div class="vl" style="left:255px;top:237px;height:543px;background:#dadade"></div>
<div class="vl" style="left:383px;top:237px;height:543px;background:#dadade"></div>
<div class="vl" style="left:511px;top:237px;height:543px;background:#dadade"></div>
<div class="vl" style="left:639px;top:237px;height:543px;background:#dadade"></div>
<div class="vl" style="left:767px;top:237px;height:543px;background:#dadade"></div>
<div class="vl" style="left:935px;top:237px;height:543px;background:#dadade"></div>
<div class="vl" style="left:1106px;top:237px;height:543px;background:#dadade"></div>
<div class="vl" style="left:1234px;top:237px;height:543px;background:#dadade"></div>
<div class="vl" style="left:1362px;top:237px;height:543px;background:#dadade"></div>
<div class="vl" style="left:1565px;top:237px;height:543px;background:#dadade"></div>
<div class="vl" style="left:1693px;top:237px;height:543px;background:#dadade"></div>
<div class="vl" style="left:127px;top:493px;height:31px;background:#c9cdf5"></div>
<div class="vl" style="left:255px;top:493px;height:31px;background:#c9cdf5"></div>
<div class="vl" style="left:383px;top:493px;height:31px;background:#c9cdf5"></div>
<div class="vl" style="left:511px;top:493px;height:31px;background:#c9cdf5"></div>
<div class="vl" style="left:639px;top:493px;height:31px;background:#c9cdf5"></div>
<div class="vl" style="left:767px;top:493px;height:31px;background:#c9cdf5"></div>
<div class="vl" style="left:935px;top:493px;height:31px;background:#c9cdf5"></div>
<div class="vl" style="left:1106px;top:493px;height:31px;background:#c9cdf5"></div>
<div class="vl" style="left:1234px;top:493px;height:31px;background:#c9cdf5"></div>
<div class="vl" style="left:1362px;top:493px;height:31px;background:#c9cdf5"></div>
<div class="vl" style="left:1565px;top:493px;height:31px;background:#c9cdf5"></div>
<div class="vl" style="left:1693px;top:493px;height:31px;background:#c9cdf5"></div>
<div class="abs" style="left:0;top:1016px;width:1920px;height:7px;background:linear-gradient(rgba(240,240,245,0),#f1f1f5)"></div>
<div class="footer"></div>
<div class="cb" style="left:12px;top:1044px"></div>
<div class="ft" style="left:36px;top:1043px">Vybrat všechny řádky</div>
<div class="ft" style="left:174px;top:1045px;font-size:11px;color:#85858f">(vybráno řádek: 1)</div>
<div class="cb" style="left:275px;top:1043px"></div>
<div class="ft" style="left:298px;top:1043px">Filtrovat vybrané</div>
<div class="btn" style="left:1451px;width:165px"></div>
<svg class="abs" style="left:1466px;top:1044px" width="15" height="15" viewBox="0 0 20 20"><path d="M8.6 11.4a3.4 3.4 0 0 0 4.8 0l3.7-3.7a3.4 3.4 0 0 0-4.8-4.8l-1.4 1.4" fill="none" stroke="#4b55a8" stroke-width="2.2" stroke-linecap="round"/><path d="M11.4 8.6a3.4 3.4 0 0 0-4.8 0l-3.7 3.7a3.4 3.4 0 0 0 4.8 4.8l1.4-1.4" fill="none" stroke="#4b55a8" stroke-width="2.2" stroke-linecap="round"/></svg>
<div class="bt" style="left:1487px;top:1044px">VYTVOŘIT DÁVKY</div>
<div class="btn" style="left:1628px;width:182px"></div>
<svg class="abs" style="left:1642px;top:1044px" width="12" height="15" viewBox="0 0 12 15"><path d="M6 11V1.5M2 5.5l4-4 4 4M1 14h10" fill="none" stroke="#4b55a8" stroke-width="1.6" stroke-linecap="round" stroke-linejoin="round"/></svg>
<div class="bt" style="left:1660px;top:1044px">UVOLNIT DO VÝROBY</div>
<div class="btn" style="left:1825px;width:83px"></div>
<svg class="abs" style="left:1840px;top:1045px" width="11" height="14" viewBox="0 0 11 14"><rect x="1" y="1" width="9" height="12" rx="4.5" fill="none" stroke="#4b55a8" stroke-width="1.3"/><path d="M1 6h9M5.5 1v5" stroke="#4b55a8" stroke-width="1.3"/></svg>
<div class="bt" style="left:1857px;top:1044px">AKCE</div>
<div class="abs" style="left:1795px;top:982px;width:154px;height:154px;border-radius:50%;background:rgba(255,0,230,0.5);border:8px solid #f0f"></div>
</div></body></html>
